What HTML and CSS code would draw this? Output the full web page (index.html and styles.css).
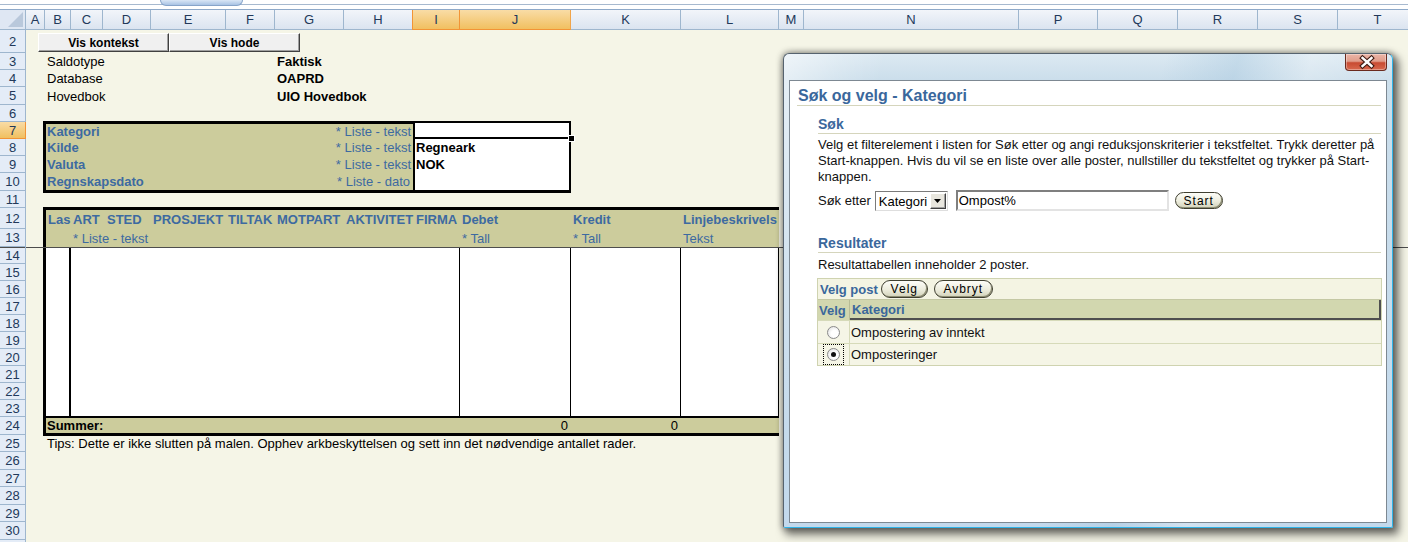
FILE: index.html
```html
<!DOCTYPE html>
<html lang="nb">
<head>
<meta charset="utf-8">
<title>Søk og velg - Kategori</title>
<link rel="stylesheet" href="styles.css">
</head>
<body>
<div class="topstrip"><div class="topline"><div class="tab"></div></div></div>
<main class="sheet">
  <div class="ch corner"><span class="tri"></span></div>
  <div class="ch">A</div>
  <div class="ch">B</div>
  <div class="ch">C</div>
  <div class="ch">D</div>
  <div class="ch">E</div>
  <div class="ch">F</div>
  <div class="ch">G</div>
  <div class="ch">H</div>
  <div class="ch sel">I</div>
  <div class="ch sel">J</div>
  <div class="ch">K</div>
  <div class="ch">L</div>
  <div class="ch">M</div>
  <div class="ch">N</div>
  <div class="ch">P</div>
  <div class="ch">Q</div>
  <div class="ch">R</div>
  <div class="ch">S</div>
  <div class="ch">T</div>

  <div class="rh">2</div>
  <div class="rh">3</div>
  <div class="rh">4</div>
  <div class="rh">5</div>
  <div class="rh">6</div>
  <div class="rh sel">7</div>
  <div class="rh">8</div>
  <div class="rh">9</div>
  <div class="rh">10</div>
  <div class="rh">11</div>
  <div class="rh">12</div>
  <div class="rh">13</div>
  <div class="rh frz">14</div>
  <div class="rh">15</div>
  <div class="rh">16</div>
  <div class="rh">17</div>
  <div class="rh">18</div>
  <div class="rh">19</div>
  <div class="rh">20</div>
  <div class="rh">21</div>
  <div class="rh">22</div>
  <div class="rh">23</div>
  <div class="rh">24</div>
  <div class="rh">25</div>
  <div class="rh">26</div>
  <div class="rh">27</div>
  <div class="rh">28</div>
  <div class="rh">29</div>
  <div class="rh">30</div>
  <div class="rh"></div>

  <div class="btnbar">
    <button class="xbtn">Vis kontekst</button>
    <button class="xbtn">Vis hode</button>
  </div>

  <div class="info">
    <div class="lab">Saldotype</div><div class="val">Faktisk</div>
    <div class="lab">Database</div><div class="val">OAPRD</div>
    <div class="lab">Hovedbok</div><div class="val">UIO Hovedbok</div>
  </div>

  <div class="kbox">
    <div class="krow"><span class="klab">Kategori</span><span class="khint">* Liste - tekst</span></div>
    <div class="krow"><span class="klab">Kilde</span><span class="khint">* Liste - tekst</span></div>
    <div class="krow"><span class="klab">Valuta</span><span class="khint">* Liste - tekst</span></div>
    <div class="krow"><span class="klab">Regnskapsdato</span><span class="khint dato">* Liste - dato</span></div>
  </div>

  <div class="vbox">
    <div class="vcell active"><span class="handle"></span></div>
    <div class="vcell">Regneark</div>
    <div class="vcell">NOK</div>
    <div class="vcell"></div>
  </div>

  <div class="hdr2">
    <div class="hc">Las</div>
    <div class="hc">ART</div>
    <div class="hc sted">STED</div>
    <div class="hc">PROSJEKT</div>
    <div class="hc">TILTAK</div>
    <div class="hc">MOTPART</div>
    <div class="hc">AKTIVITET</div>
    <div class="hc firma">FIRMA</div>
    <div class="hc">Debet</div>
    <div class="hc">Kredit</div>
    <div class="hc">Linjebeskrivels</div>
    <div class="hs"></div>
    <div class="hs">* Liste - tekst</div>
    <div class="hs"></div>
    <div class="hs"></div>
    <div class="hs"></div>
    <div class="hs"></div>
    <div class="hs"></div>
    <div class="hs"></div>
    <div class="hs">* Tall</div>
    <div class="hs">* Tall</div>
    <div class="hs">Tekst</div>
  </div>

  <div class="body2">
    <div class="bc bc-first"></div>
    <div class="bc"></div>
    <div class="bc"></div>
    <div class="bc"></div>
    <div class="bc"></div>
  </div>

  <div class="sum">
    <div class="sum-l">Summer:</div>
    <div class="num">0</div>
    <div class="num">0</div>
    <div></div>
  </div>

  <div class="tips">Tips: Dette er ikke slutten på malen. Opphev arkbeskyttelsen og sett inn det nødvendige antallet rader.</div>

  <div class="freeze"></div>
</main>

<div class="dialog">
  <div class="closebtn">
    <svg width="42" height="16" viewBox="0 0 42 16" aria-hidden="true">
      <path d="M16.5 4 L25.5 12 M25.5 4 L16.5 12" stroke="#3d1a12" stroke-width="4.6" stroke-linecap="square" fill="none"/>
      <path d="M16.5 4 L25.5 12 M25.5 4 L16.5 12" stroke="#ffffff" stroke-width="2.4" stroke-linecap="square" fill="none"/>
    </svg>
  </div>
  <div class="panel">
    <h1 class="dtitle">Søk og velg - Kategori</h1>
    <div class="dsec">
      <h2 class="dh">Søk</h2>
      <p class="dp">Velg et filterelement i listen for Søk etter og angi reduksjonskriterier i tekstfeltet. Trykk deretter på Start-knappen. Hvis du vil se en liste over alle poster, nullstiller du tekstfeltet og trykker på Start-knappen.</p>
      <div class="srow">
        <span class="slabel">Søk etter</span>
        <div class="select">
          <span class="selval">Kategori</span>
          <span class="dd"><svg width="7" height="4" viewBox="0 0 7 4" aria-hidden="true"><path d="M0 0 H7 L3.5 4 Z" fill="#000"/></svg></span>
        </div>
        <div class="sinput">Ompost%</div>
        <button class="pill start">Start</button>
      </div>
      <h2 class="dh dh-res">Resultater</h2>
      <p class="dp dp-res">Resultattabellen inneholder 2 poster.</p>
      <div class="results">
        <div class="rtool">
          <span class="vp">Velg post</span>
          <button class="pill velg">Velg</button>
          <button class="pill avbryt">Avbryt</button>
        </div>
        <div class="rhead">
          <div class="c1">Velg</div>
          <div class="c2">Kategori</div>
        </div>
        <div class="rrow">
          <div class="c1"><span class="radio"></span></div>
          <div class="c2">Ompostering av inntekt</div>
        </div>
        <div class="rrow last">
          <div class="c1"><span class="focus"><span class="radio on"></span></span></div>
          <div class="c2">Omposteringer</div>
        </div>
      </div>
    </div>
  </div>
</div>
</body>
</html>
```

FILE: styles.css
```css
* { box-sizing: border-box; }

html, body {
  margin: 0;
  padding: 0;
}

body {
  width: 1408px;
  height: 542px;
  overflow: hidden;
  position: relative;
  background: #f5f5e7;
  font-family: "Liberation Sans", Arial, sans-serif;
  font-size: 13px;
  color: #000;
}

/* top strip */
.topstrip {
  height: 10px;
  background: #fff;
  border-bottom: 1px solid #8ea9c9;
}
.topline {
  height: 5px;
  border-bottom: 1px solid #a7b9cf;
}
.tab {
  margin-left: 160px;
  width: 83px;
  height: 6px;
  background: linear-gradient(#d9e6f5, #a9c3e4);
  border: 1px solid #87a4c9;
  border-top: 0;
  border-radius: 0 0 10px 10px;
}

/* sheet grid */
.sheet {
  display: grid;
  width: 1418px;
  grid-template-columns: 26px 19px 26px 32px 48px 75px 49px 69px 69px 47px 111px 110px 98px 25px 215px 79px 80px 80px 80px 80px;
  grid-template-rows: 20px 23px 17px 17px 18px 17px 17px 17px 17px 18px 17px 21px 18px repeat(10, 17px) 18px 17px 18px 17px 18px 17px 18px 18px;
}

.ch {
  grid-row: 1;
  background: linear-gradient(#f2f5fa, #dbe4f0);
  border-right: 1px solid #9eb6ce;
  border-bottom: 1px solid #9eb6ce;
  color: #22395a;
  text-align: center;
  line-height: 19px;
  font-size: 13px;
}
.ch.sel {
  background: linear-gradient(#f9dca6, #f1c060);
  border-right-color: #f0a44a;
  border-bottom-color: #f29436;
  border-left: 1px solid #f29436;
  margin-left: -1px;
}
.ch.corner {
  position: relative;
  background: #dfe7f3;
}
.tri {
  position: absolute;
  right: 2px;
  bottom: 2px;
  width: 0;
  height: 0;
  border-left: 15px solid transparent;
  border-bottom: 15px solid #b9c8db;
}

.rh {
  grid-column: 1;
  background: #e4ecf7;
  border-right: 1px solid #9eb6ce;
  border-bottom: 1px solid #9eb6ce;
  color: #22395a;
  font-size: 13px;
  display: flex;
  align-items: center;
  justify-content: center;
}
.rh.sel {
  background: linear-gradient(#f9dca6, #f1c060);
  border-bottom-color: #f29436;
  border-right-color: #f29436;
}
.rh.frz {
  box-shadow: inset 0 1px 0 #4d4d4d;
}

/* row 2 buttons */
.btnbar {
  grid-row: 2;
  grid-column: 2 / 12;
  display: flex;
  align-items: flex-start;
  padding: 3px 0 0 12px;
}
.xbtn {
  width: 131px;
  height: 19px;
  margin: 0;
  padding: 0;
  background: #f0f0f0;
  border: 1px solid;
  border-color: #ffffff #404040 #404040 #ffffff;
  box-shadow: inset -1px -1px 0 #a0a0a0;
  font-family: "Liberation Sans", Arial, sans-serif;
  font-weight: 700;
  font-size: 12px;
  color: #000;
  line-height: 16px;
}

/* info rows 3-5 */
.info {
  grid-row: 3 / 6;
  grid-column: 3 / 12;
  display: grid;
  grid-template-columns: 230px 1fr;
  grid-template-rows: 17px 17px 18px;
  align-items: center;
}
.lab { padding-left: 2px; }
.val { padding-left: 2px; font-weight: 700; }

/* parameter box */
.kbox {
  grid-row: 7 / 11;
  grid-column: 3 / 10;
  margin: -1px 0 -2px -2px;
  border: 3px solid #000;
  border-right: 0;
  background: #cccc9c;
  display: grid;
  grid-template-rows: 15px 17px 17px 1fr;
}
.krow {
  display: flex;
  justify-content: space-between;
  align-items: center;
  padding: 0 2px 0 1px;
  white-space: nowrap;
}
.klab { font-weight: 700; color: #3d6aa1; }
.khint { color: #3d6aa1; }
.khint.dato { margin-right: 1px; }

.vbox {
  grid-row: 7 / 11;
  grid-column: 10 / 12;
  margin: -1px 0 -2px 0;
  border: 2px solid #000;
  border-bottom-width: 3px;
  background: #fff;
  display: grid;
  grid-template-rows: 16px 17px 17px 1fr;
}
.vcell {
  padding-left: 1px;
  font-weight: 700;
  display: flex;
  align-items: center;
}
.vcell.active {
  position: relative;
  border-bottom: 2px solid #000;
}
.handle {
  position: absolute;
  right: -6px;
  bottom: -5px;
  width: 7px;
  height: 7px;
  background: #000;
  border: 1px solid #fff;
}

/* lines header */
.hdr2 {
  grid-row: 12 / 14;
  grid-column: 3 / 14;
  margin: -1px 0 -2px -2px;
  border: 3px solid #000;
  border-bottom-width: 2px;
  border-right: 0;
  background: #cccc9c;
  overflow: hidden;
  display: grid;
  grid-template-columns: 25px 32px 48px 75px 49px 69px 69px 47px 111px 110px 98px;
  grid-template-rows: 19px 18px;
}
.hc, .hs {
  padding-left: 2px;
  white-space: nowrap;
  color: #3d6aa1;
  display: flex;
  align-items: center;
}
.hc { font-weight: 700; }
.hc.sted { padding-left: 4px; }
.hc.firma { padding-left: 3px; }

.body2 {
  grid-row: 14 / 24;
  grid-column: 3 / 14;
  margin-left: -2px;
  border-left: 3px solid #000;
  background: #fff;
  display: grid;
  grid-template-columns: 25px 389px 111px 110px 98px;
}
.bc { border-right: 1px solid #000; }
.bc-first { border-right-width: 2px; }

.sum {
  grid-row: 24;
  grid-column: 3 / 14;
  margin: -1px 0 -1px -2px;
  border: 3px solid #000;
  border-top-width: 2px;
  border-right: 0;
  background: #cccc9c;
  display: grid;
  grid-template-columns: 414px 111px 110px 98px;
  align-items: center;
}
.sum-l { font-weight: 700; padding-left: 1px; }
.num { text-align: right; padding-right: 3px; }

.tips {
  grid-row: 25;
  grid-column: 3 / -1;
  padding-left: 2px;
  white-space: nowrap;
  display: flex;
  align-items: center;
}

.freeze {
  grid-row: 14;
  grid-column: 2 / -1;
  align-self: start;
  height: 1px;
  background: #4d4d4d;
  z-index: 2;
}

/* dialog window */
.dialog {
  position: absolute;
  left: 783px;
  top: 53px;
  width: 610px;
  height: 475px;
  z-index: 10;
  display: flex;
  flex-direction: column;
  padding: 26px 5px 4px;
  border: 1px solid #56636f;
  border-right-color: #2fb4e8;
  border-bottom-color: #2fb4e8;
  border-radius: 6px 6px 2px 2px;
  background:
    linear-gradient(105deg, rgba(255,255,255,0.55) 0, rgba(255,255,255,0.2) 8%, rgba(255,255,255,0) 14%, rgba(255,255,255,0) 52%, rgba(160,195,220,0.35) 62%, rgba(255,255,255,0.25) 72%, rgba(255,255,255,0) 85%),
    linear-gradient(#dce9f2, #cbdeeb 26px, #c3d9ec);
  box-shadow: 0 0 6px 1px rgba(0,0,0,0.35), 4px 5px 9px 2px rgba(0,0,0,0.5);
}
.closebtn {
  position: absolute;
  top: 0;
  right: 5px;
  width: 42px;
  height: 17px;
  border: 1px solid #6a2a1e;
  border-top: 0;
  border-radius: 0 0 4px 4px;
  background: linear-gradient(#ebb5a7 0%, #e19d8b 45%, #c84b32 55%, #d8694e 100%);
  box-shadow: inset 0 0 0 1px rgba(255,255,255,0.35);
}
.closebtn svg { display: block; }

.panel {
  flex: 1;
  background: #fff;
  border: 1px solid #7d8892;
}

.dtitle {
  margin: 0 5px 0 7px;
  padding: 6px 0 0 1px;
  font-size: 16px;
  line-height: 18px;
  font-weight: 700;
  color: #3a679c;
  border-bottom: 1px solid #d5d5bc;
}
.dsec {
  margin: 0 5px 0 28px;
}
.dh {
  margin: 10px 0 0;
  padding-bottom: 1px;
  font-size: 14px;
  line-height: 16px;
  font-weight: 700;
  color: #3a679c;
  border-bottom: 1px solid #d5d5bc;
}
.dh-res { margin-top: 24px; }
.dp {
  margin: 3px 0 0;
  font-size: 13px;
  line-height: 16px;
  color: #111;
}
.dp-res { margin-top: 4px; }

.srow {
  margin-top: 5px;
  height: 21px;
  display: flex;
  align-items: center;
}
.slabel { margin-right: 4px; color: #111; }
.select {
  width: 73px;
  height: 20px;
  margin-top: 1px;
  display: flex;
  align-items: center;
  padding-left: 3px;
  border: 1px solid;
  border-color: #7a7a7a #dedede #dedede #7a7a7a;
  background: #fff;
}
.selval { flex: 1; }
.dd {
  width: 16px;
  height: 16px;
  margin-right: 1px;
  display: flex;
  align-items: center;
  justify-content: center;
  background: #e8e6de;
  border: 1px solid;
  border-color: #ffffff #404040 #404040 #ffffff;
  box-shadow: inset -1px -1px 0 #a0a0a0;
}
.dd svg { display: block; }
.sinput {
  margin-left: 8px;
  width: 213px;
  height: 21px;
  padding-left: 1px;
  line-height: 17px;
  border: 2px solid;
  border-color: #7f7f7f #e3e3e3 #e3e3e3 #7f7f7f;
  background: #fff;
}

.pill {
  margin: 0;
  padding: 0;
  height: 17px;
  border: 1px solid #3f3f30;
  border-radius: 9px;
  background: linear-gradient(#fdfdf8, #ececdc 55%, #d2d2ba);
  box-shadow: inset -1px -1px 0 #8f8f74;
  font-family: "Liberation Sans", Arial, sans-serif;
  font-size: 12px;
  letter-spacing: 1px;
  line-height: 14px;
  color: #000;
  text-align: center;
}
.pill.start { margin-left: 6px; width: 48px; }
.pill.velg { width: 47px; height: 18px; margin-left: 1px; }
.pill.avbryt { width: 59px; height: 18px; margin-left: 6px; }

.results {
  margin: 5px 0 0 -1px;
  width: 565px;
  border: 1px solid #cfd3b0;
  background: #f5f5e6;
}
.rtool {
  height: 20px;
  display: flex;
  align-items: center;
  padding-left: 2px;
  background: #f4f4e3;
}
.vp {
  font-weight: 700;
  color: #3a679c;
  margin-right: 2px;
}
.rhead {
  display: flex;
  height: 21px;
  background: #d2d7af;
  border-top: 1px solid #c4c8a4;
}
.rhead .c1, .rhead .c2 {
  font-weight: 700;
  color: #3a679c;
  display: flex;
  align-items: center;
}
.rhead .c1 {
  width: 32px;
  padding-left: 1px;
  border-right: 1px solid #b7bc96;
}
.rhead .c2 {
  flex: 1;
  padding-left: 2px;
  border-right: 2px solid #4f4f4f;
  border-bottom: 2px solid #4f4f4f;
}
.rrow {
  display: flex;
  height: 23px;
  border-top: 1px solid #d6dab9;
  background: #f5f5e6;
}
.rrow.last { height: 22px; }
.rrow .c1 {
  width: 32px;
  border-right: 1px solid #d6dab9;
  display: flex;
  align-items: center;
  justify-content: center;
}
.rrow .c2 {
  flex: 1;
  padding-left: 1px;
  display: flex;
  align-items: center;
  color: #111;
}
.radio {
  width: 13px;
  height: 13px;
  border-radius: 50%;
  border: 1px solid #8a8a8a;
  background: radial-gradient(circle at 60% 60%, #ffffff 35%, #d9d9d9);
  display: flex;
  align-items: center;
  justify-content: center;
}
.radio.on::after {
  content: "";
  width: 5px;
  height: 5px;
  border-radius: 50%;
  background: #111;
}
.focus {
  width: 21px;
  height: 21px;
  border: 1px dotted #000;
  display: flex;
  align-items: center;
  justify-content: center;
}
```
